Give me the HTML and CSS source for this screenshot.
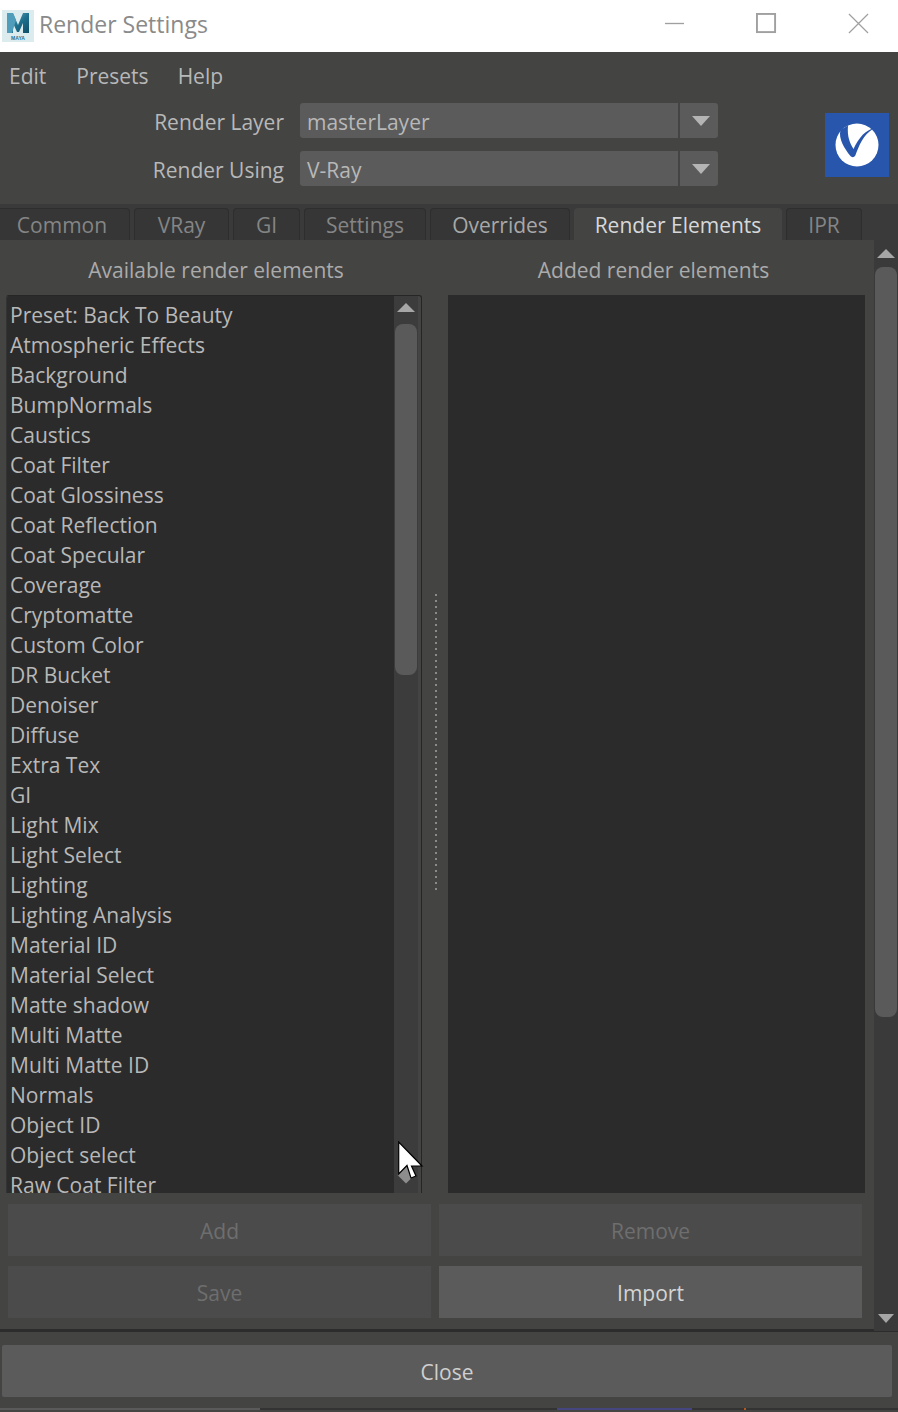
FILE: index.html
```html
<!DOCTYPE html>
<html lang="en">
<head>
<meta charset="utf-8">
<title>Render Settings</title>
<link rel="stylesheet" href="styles.css">
</head>
<body>
<div class="window">
  <header class="titlebar">
    <svg class="maya-icon" viewBox="0 0 32 32" aria-hidden="true">
      <defs><linearGradient id="mg" x1="0" y1="0" x2="1" y2="1"><stop offset="0" stop-color="#6fb0c8"/><stop offset=".55" stop-color="#1d6f8c"/><stop offset="1" stop-color="#0f4f68"/></linearGradient></defs>
      <rect width="32" height="32" fill="#dcecee"/>
      <path d="M5 3h6l5 12 5-12h6v20h-6V13l-4 9h-2l-4-9v10H5z" fill="url(#mg)"/>
      <path d="M5 3h6l3 7-4 13H5z" fill="#4f9dbb"/>
      <text x="16" y="30" class="maya-text">MAYA</text>
    </svg>
    <span class="title">Render Settings</span>
    <div class="win-controls">
      <svg class="win-btn" viewBox="0 0 22 22"><path d="M1 11h20" stroke="#a0a0a0" stroke-width="1.4"/></svg>
      <svg class="win-btn" viewBox="0 0 22 22"><rect x="1" y="1" width="19" height="19" fill="none" stroke="#a0a0a0" stroke-width="2"/></svg>
      <svg class="win-btn" viewBox="0 0 22 22"><path d="M1 1l20 20M21 1L1 21" stroke="#a0a0a0" stroke-width="1.3"/></svg>
    </div>
  </header>

  <nav class="menubar"><span>Edit</span><span>Presets</span><span>Help</span></nav>

  <section class="form">
    <div class="form-rows">
      <div class="form-row">
        <label class="form-label">Render Layer</label>
        <div class="combo"><div class="combo-value">masterLayer</div><div class="combo-arrow"><i class="tri-down"></i></div></div>
      </div>
      <div class="form-row">
        <label class="form-label">Render Using</label>
        <div class="combo"><div class="combo-value">V-Ray</div><div class="combo-arrow"><i class="tri-down"></i></div></div>
      </div>
    </div>
    <svg class="vray-logo" viewBox="0 0 64 64" aria-hidden="true">
      <rect width="64" height="64" fill="#2756ac"/>
      <circle cx="32" cy="32" r="21.5" fill="#fff"/>
      <path d="M15.500 17C13 26 20 36 25 42.500c2 2.500 4.500 2 5.500-.5C34 33 38 22 48.500 15.500 41 17 34 24 28.500 36 25 30 22 24 23 12.500z" fill="#2756ac"/>
    </svg>
  </section>

  <div class="tabs">
    <div class="tab t-common">Common</div>
    <div class="tab t-vray">VRay</div>
    <div class="tab t-gi">GI</div>
    <div class="tab t-settings">Settings</div>
    <div class="tab t-overrides">Overrides</div>
    <div class="tab tab-active t-elements">Render Elements</div>
    <div class="tab t-ipr">IPR</div>
  </div>

  <main class="content">
    <div class="panel">
      <div class="columns">
        <div class="col-left">
          <div class="col-title">Available render elements</div>
          <div class="list-frame">
            <ul class="list">
              <li>Preset: Back To Beauty</li>
              <li>Atmospheric Effects</li>
              <li>Background</li>
              <li>BumpNormals</li>
              <li>Caustics</li>
              <li>Coat Filter</li>
              <li>Coat Glossiness</li>
              <li>Coat Reflection</li>
              <li>Coat Specular</li>
              <li>Coverage</li>
              <li>Cryptomatte</li>
              <li>Custom Color</li>
              <li>DR Bucket</li>
              <li>Denoiser</li>
              <li>Diffuse</li>
              <li>Extra Tex</li>
              <li>GI</li>
              <li>Light Mix</li>
              <li>Light Select</li>
              <li>Lighting</li>
              <li>Lighting Analysis</li>
              <li>Material ID</li>
              <li>Material Select</li>
              <li>Matte shadow</li>
              <li>Multi Matte</li>
              <li>Multi Matte ID</li>
              <li>Normals</li>
              <li>Object ID</li>
              <li>Object select</li>
              <li>Raw Coat Filter</li>
            </ul>
            <div class="list-scroll">
              <i class="tri-up small"></i>
              <div class="list-thumb"></div>
              <i class="tri-diamond"></i>
            </div>
          </div>
        </div>
        <div class="splitter"></div>
        <div class="col-right">
          <div class="col-title">Added render elements</div>
          <div class="added"></div>
        </div>
      </div>
      <div class="buttons">
        <button class="btn btn-off">Add</button>
        <button class="btn btn-off">Remove</button>
        <button class="btn btn-off">Save</button>
        <button class="btn btn-on">Import</button>
      </div>
      <div class="panel-rule"></div>
    </div>
    <aside class="main-scroll">
      <i class="tri-up"></i>
      <div class="main-thumb"></div>
      <i class="tri-down grey"></i>
    </aside>
  </main>

  <footer class="footer">
    <button class="btn-close">Close</button>
  </footer>
  <div class="bottom-edge"></div>

  <svg class="cursor" viewBox="0 0 26 40" aria-hidden="true">
    <path d="M.7 1V33L9 24.500 13 37l5-2-4.500-10H24z" fill="#fff" stroke="#000" stroke-width="1.200"/>
  </svg>
</div>
</body>
</html>
```
FILE: styles.css
```css
* { box-sizing: border-box; }
html, body { margin: 0; padding: 0; }
body { width: 898px; height: 1412px; overflow: hidden; background: #444443; font-family: "Open Sans", "Noto Sans", sans-serif; font-size: 21px; color: #b8b8b8; }
.window { position: relative; width: 898px; height: 1412px; display: flex; flex-direction: column; overflow: hidden; }

.titlebar { height: 52px; flex: none; background: #fff; display: flex; align-items: center; padding-left: 2px; }
.maya-icon { width: 32px; height: 32px; flex: none; }
.maya-text { font-family: "Liberation Sans", sans-serif; font-size: 5px; font-weight: 700; fill: #2b6f8c; text-anchor: middle; }
.title { margin: 0 0 4px 5px; font-size: 23px; color: #8a8a8a; }
.win-controls { margin: 0 0 6px auto; display: flex; align-items: center; gap: 71px; padding-right: 29px; }
.win-btn { width: 21px; height: 21px; display: block; }

.menubar { height: 50px; flex: none; display: flex; align-items: center; gap: 30px; padding: 0 0 2px 9px; }
.menubar span:last-child { margin-left: -1px; }

.form { height: 102px; flex: none; display: flex; }
.form-rows { width: 718px; display: flex; flex-direction: column; gap: 13px; padding-top: 1px; }
.form-row { display: flex; align-items: center; height: 35px; }
.form-label { width: 284px; text-align: right; margin-right: 16px; padding-top: 2px; }
.combo { width: 418px; height: 35px; display: flex; gap: 2px; }
.combo-value { flex: 1; background: #5b5b5b; border-radius: 3px 0 0 3px; padding-left: 7px; line-height: 38px; }
.combo-arrow { width: 38px; background: #5b5b5b; border-radius: 0 3px 3px 0; display: flex; align-items: center; justify-content: center; padding-left: 4px; }
.vray-logo { width: 64px; height: 64px; margin: 11px 0 0 107px; flex: none; }

.tri-down { width: 0; height: 0; display: block; border-left: 9px solid transparent; border-right: 9px solid transparent; border-top: 10px solid #b4b4b4; }
.tri-down.grey { border-left-width: 8.500px; border-right-width: 8.500px; border-top: 9px solid #a6a6a6; }
.tri-up { width: 0; height: 0; display: block; border-left: 9px solid transparent; border-right: 9px solid transparent; border-bottom: 9px solid #a6a6a6; }

.tabs { height: 36px; flex: none; background: #3a3a3a; display: flex; align-items: flex-end; }
.tab { height: 32px; background: #363636; border: 1px solid #2e2e2e; border-bottom: 0; border-radius: 4px 4px 0 0; color: #858585; display: flex; align-items: center; justify-content: center; margin-right: 4px; }
.tab-active { background: #444443; border-color: #444443; color: #d8d8d8; }
.t-common { width: 130px; border-left: 0; border-top-left-radius: 0; padding-right: 5px; }
.t-vray { width: 95px; }
.t-gi { width: 67px; }
.t-settings { width: 122px; }
.t-overrides { width: 140px; color: #a8a8a8; }
.t-elements { width: 208px; }
.t-ipr { width: 76px; }

.content { height: 1091px; flex: none; display: flex; }
.panel { width: 874px; display: flex; flex-direction: column; }
.columns { height: 953px; display: flex; }
.col-left { width: 416px; margin-left: 6px; display: flex; flex-direction: column; }
.col-title { height: 55px; flex: none; text-align: center; line-height: 60px; color: #ababab; }
.col-left .col-title { padding-left: 4px; }
.list-frame { height: 898px; flex: none; display: flex; border: 1px solid #262626; border-bottom: 0; border-radius: 3px 3px 0 0; border-left-color: #333; padding-right: 3px; overflow: hidden; }
.list { list-style: none; margin: 0; padding: 4px 0 0 3px; width: 387px; height: 100%; background: #2b2b2b; overflow: hidden; }
.list li { height: 30px; line-height: 30px; white-space: nowrap; }
.list-scroll { width: 24px; background: #3c3c3c; display: flex; flex-direction: column; align-items: center; }
.list-scroll .small { margin-top: 7px; }
.list-thumb { width: 22px; height: 351px; margin-top: 12px; background: #5a5a5a; border-radius: 8px; }
.tri-diamond { width: 12px; height: 12px; background: #8d8d8d; transform: rotate(45deg); margin-top: auto; margin-bottom: 12px; }

.splitter { width: 26px; margin-top: 352px; height: 298px; background-image: radial-gradient(circle, #8a8a8a 1px, transparent 1.100px); background-size: 2px 6px; background-repeat: repeat-y; background-position: 13px 0; flex: none; }
.col-right { width: 417px; display: flex; flex-direction: column; }
.col-right .col-title { padding-right: 6px; }
.added { height: 898px; flex: none; background: #2b2b2b; }

.buttons { display: grid; grid-template-columns: 423px 423px; gap: 10px 8px; padding: 11px 0 0 8px; }
.btn { height: 52px; border: 0; font: inherit; background: #4b4b4b; color: #6e6e6e; padding: 2px 0 0; }
.btn-on { background: #5b5b5b; color: #d4d4d4; }
.panel-rule { height: 4px; margin-top: 11px; background: #5a5a5a; border-top: 1px solid #2c2c2c; border-bottom: 1px solid #2c2c2c; }

.main-scroll { width: 24px; background: #3a3a3a; display: flex; flex-direction: column; align-items: center; }
.main-scroll .tri-up { margin-top: 9px; }
.main-thumb { width: 22px; height: 750px; margin-top: 9px; background: #5a5a5a; border-radius: 8px; }
.main-scroll .tri-down { margin-top: auto; margin-bottom: 8px; }

.footer { height: 77px; flex: none; padding: 13px 6px 0 2px; border-top: 1px solid #2c2c2c; }
.btn-close { width: 890px; height: 52px; border: 0; font: inherit; background: #5b5b5b; color: #cfcfcf; border-radius: 2px; padding: 2px 0 0; }
.bottom-edge { height: 2px; flex: none; background: linear-gradient(to right, #5a5a5a 260px, #333 260px, #333 557px, #45457f 557px, #45457f 692px, #333 692px, #333 744px, #b0591f 744px, #b0591f 746px, #333 746px); }
.cursor { position: absolute; left: 398px; top: 1141px; width: 26px; height: 40px; }
```
